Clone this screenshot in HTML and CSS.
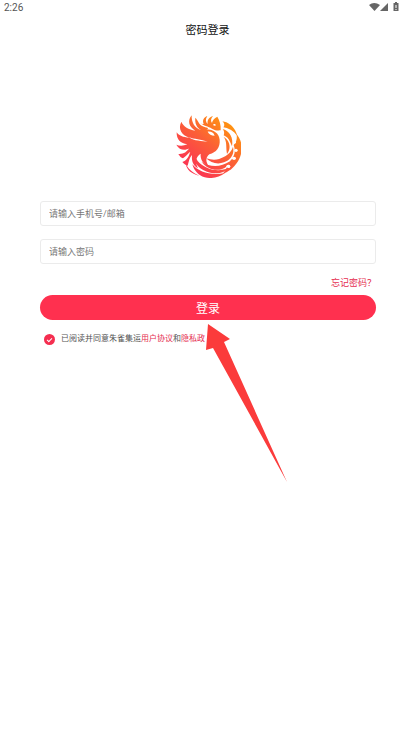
FILE: index.html
```html
<!DOCTYPE html>
<html lang="zh-CN">
<head>
    <meta charset="UTF-8">
    <meta name="viewport" content="width=device-width, initial-scale=1.0">
    <title>密码登录</title>
    <link rel="stylesheet" href="styles.css">
</head>
<body>

<div class="status-bar">
    <span>2:26</span>
    <svg class="status-icons" viewBox="0 0 30 10" aria-hidden="true">
        <path d="M0 3Q5 -1 11 3L5.500 9Z"/>
        <path d="M19 1V9H11Z"/>
        <path d="M25 1H26V0H28V1H29.500V9H24.500V1Z"/>
        <path class="charge" d="M26.500 3H27.500V6H26.500ZM26.500 7H27.500V8H26.500Z"/>
    </svg>
</div>

<header>
    <h1>密码登录</h1>
</header>

<main class="container">
    <svg class="logo" viewBox="8 10 195 189" role="img" aria-label="朱雀集运">
        <defs>
            <linearGradient id="flame" gradientUnits="userSpaceOnUse" x1="60" y1="170" x2="175" y2="35">
                <stop offset="0" stop-color="#fb3850"/>
                <stop offset="0.5" stop-color="#fb6036"/>
                <stop offset="1" stop-color="#ff960f"/>
            </linearGradient>
        </defs>
        <g fill="url(#flame)">
            <!-- wing and body -->
            <path d="M55 11C42 26 46 46 66 57C46 53 30 45 24 30C13 52 25 70 48 78C29 77 17 72 10 62C9 84 22 96 42 98C30 103 18 103 9 99C18 116 35 118 48 110C39 121 32 128 15 127C19 134 24 139 29 140C38 134 42 127 51 120C46 133 43 145 27 151C33 158 38 161 43 162C47 151 47 139 56 130C54 148 60 162 74 170C65 151 67 135 82 126C80 145 91 158 107 164C97 151 96 138 108 128C129 122 141 107 139 84C137 65 121 54 99 53C112 50 98 48 88 44C76 38 72 22 66 18C64 34 70 48 84 56C64 50 54 32 55 11Z"/>
            <!-- crest -->
            <path d="M81 33C91 43 104 43 116 51C124 56 133 57 142 56C143 40 139 26 132 15C123 20 117 26 116 34C111 27 113 20 119 13C107 17 101 25 103 37C96 30 96 22 102 13C92 17 86 25 91 37C87 37 84 35 81 33Z"/>
            <!-- tail rising on the right -->
            <path d="M147 29C169 32 187 50 192 73C181 58 167 50 150 47C155 41 153 34 147 29Z"/>
            <path d="M148 52C169 58 181 78 176 104C169 87 165 77 151 71C154 63 152 57 148 52Z"/>
            <path d="M151 76C169 86 175 108 161 127C157 103 162 91 151 76Z"/>
            <path d="M190 68C210 91 210 126 191 153C181 168 167 180 148 187C161 172 163 157 175 143C185 129 187 116 181 100C191 90 191 80 190 68Z"/>
            <!-- sweeping lower feathers -->
            <path d="M179 105C184 127 173 144 152 152C132 160 112 153 98 140C121 147 137 144 151 136C168 127 175 117 179 105Z"/>
            <path d="M84 150C112 168 143 168 174 146C164 167 146 177 124 174C107 171 93 162 84 150Z"/>
            <path d="M61 114C63 142 78 157 101 168C126 179 146 176 165 170C151 188 124 188 101 180C73 170 55 148 61 114Z"/>
            <path d="M57 158C77 183 115 192 155 184C138 198 115 202 94 197C75 191 62 177 57 158Z"/>
            <path d="M37 155C43 171 57 183 78 192C56 188 39 175 37 155Z"/>
        </g>
        <g fill="#fff">
            <!-- gaps between the feathers -->
            <path d="M46 76C62 84 84 81 103 91C86 86 63 90 46 76Z"/>
            <path d="M103 60C113 59 121 63 124 72C114 72 107 68 103 60Z"/>
            <path d="M119 39C122 35 127 37 128 41C125 43 121 43 119 39Z"/>
            <circle cx="184" cy="92" r="4"/>
            <circle cx="188" cy="116" r="5"/>
            <ellipse cx="182" cy="140" rx="6" ry="5"/>
            <ellipse cx="165" cy="164" rx="6" ry="5"/>
        </g>
    </svg>

    <form class="login-form">
        <input class="field" type="text" placeholder="请输入手机号/邮箱" aria-label="请输入手机号/邮箱">
        <input class="field" type="password" placeholder="请输入密码" aria-label="请输入密码">
        <a class="forgot" href="#">忘记密码？</a>
        <button class="login-btn" type="button">登录</button>
        <div class="agreement">
            <input type="checkbox" id="agree" checked>
            <label for="agree">已阅读并同意朱雀集运<a href="#">用户协议</a>和<a href="#">隐私政</a></label>
            <svg class="pointer" viewBox="0 0 82 160" aria-hidden="true">
                <path d="M2 1L24 16L18 19L81 159L7 25L0 27Z"/>
            </svg>
        </div>
    </form>
</main>

</body>
</html>
```
FILE: styles.css
```css
body {
    font-family: Roboto, "Noto Sans CJK SC", sans-serif;
    background-color: #fff;
    color: #555;
    margin: 0;
    min-height: 100vh;
}
a {
    color: #e52e50;
    text-decoration: none;
}
.status-bar {
    display: flex;
    justify-content: space-between;
    align-items: center;
    height: 14px;
    padding: 0 16px 0 4px;
    font-size: 10px;
}
.status-icons {
    width: 30px;
    height: 10px;
    fill: #666;
}
.status-icons .charge {
    fill: #fff;
}
header {
    text-align: center;
    padding: 8px 0;
}
header h1 {
    margin: 0;
    font-size: 11px;
    font-weight: normal;
    line-height: 18px;
    color: #111;
}
.container {
    padding: 67px 39px 0 40px;
}
.logo {
    display: block;
    width: 65px;
    height: 63px;
    margin: 0 auto 23px;
}
.login-form {
    display: flex;
    flex-direction: column;
}
.field {
    box-sizing: border-box;
    width: 100%;
    height: 25px;
    margin: 0 0 13px;
    padding: 0 8px;
    border: 1px solid #ebebeb;
    border-radius: 3px;
    background-color: #fff;
    font-family: inherit;
    font-size: 9px;
    color: #333;
}
.field::placeholder {
    color: #777;
}
.forgot {
    align-self: flex-end;
    font-size: 9px;
    line-height: 12px;
}
.login-btn {
    height: 25px;
    margin: 6px 0 12px;
    padding: 0;
    border: none;
    border-radius: 13px;
    background-color: #ff304f;
    color: #fff;
    font-family: inherit;
    font-size: 12px;
    cursor: pointer;
}
.agreement {
    position: relative;
    display: flex;
    align-items: center;
    gap: 6px;
    padding-left: 4px;
    font-size: 8px;
    line-height: 14px;
}
.agreement input {
    appearance: none;
    width: 11px;
    height: 11px;
    margin: 0;
    border-radius: 50%;
    background-color: #f52e50;
    display: grid;
    place-items: center;
}
.agreement input:checked::before {
    content: "";
    width: 4px;
    height: 2px;
    border: solid #fff;
    border-width: 0 0 1px 1px;
    transform: rotate(-45deg);
}
.pointer {
    position: absolute;
    top: -9px;
    left: 166px;
    width: 82px;
    height: 160px;
    fill: #fb3b3b;
    pointer-events: none;
}
```
